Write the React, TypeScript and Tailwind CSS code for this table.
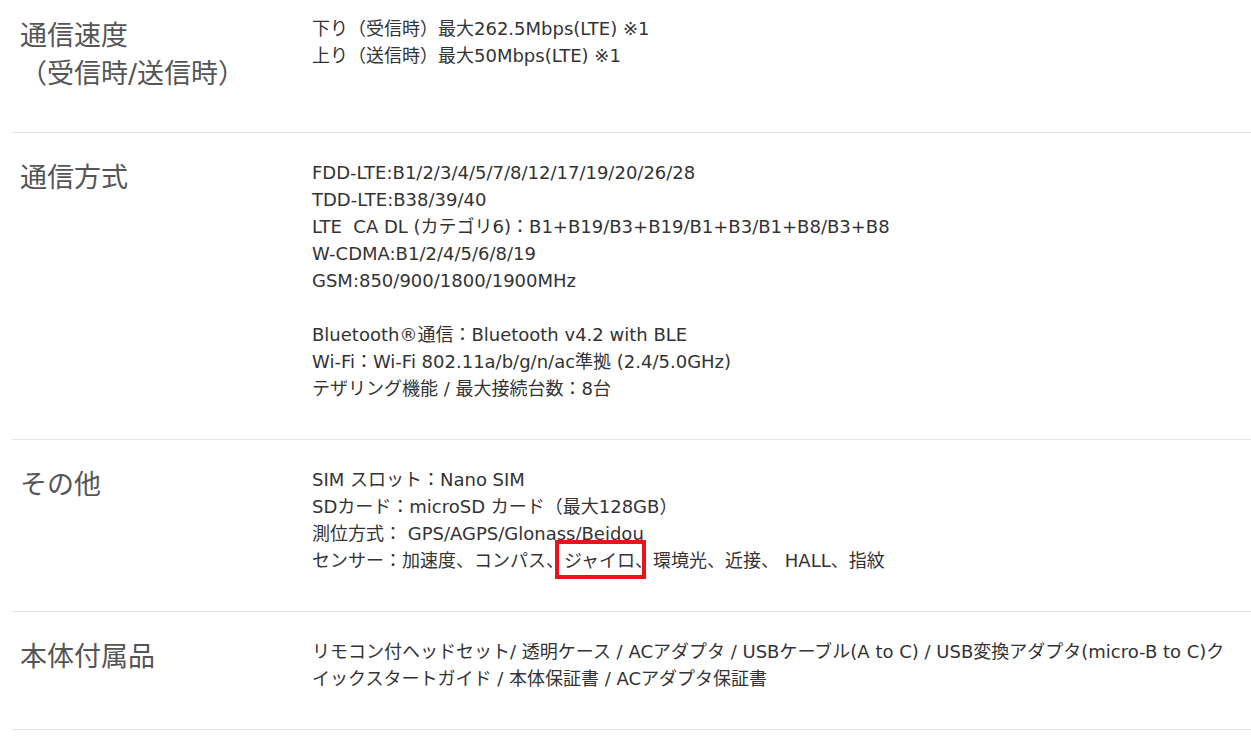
import { ReactNode } from 'react';

type Row = {
  label: ReactNode;
  body: ReactNode;
  first?: boolean;
};

const font = { fontFamily: '"DejaVu Sans", "Noto Sans CJK JP", sans-serif' };

function SpecRow({ label, body, first }: Row) {
  return (
    <div
      className={`flex border-b border-[#e5e5e5] ${first ? 'pt-[15px] pb-[39px]' : 'pt-[26px] pb-[37px]'}`}
    >
      <div
        className={`w-[300px] shrink-0 pl-[8px] text-[27px] leading-[38px] text-[#555] ${first ? 'pt-[2px]' : ''}`}
      >
        {label}
      </div>
      <div className="flex-1 pr-[4px] text-[18px] leading-[27px] text-[#333]">{body}</div>
    </div>
  );
}

export default function App() {
  return (
    <div className="min-h-screen bg-white overflow-hidden" style={font}>
      <div className="ml-[12px]">
        <SpecRow
          first
          label={
            <>
              通信速度
              <br />
              （受信時/送信時）
            </>
          }
          body={
            <>
              <p>下り（受信時）最大262.5Mbps(LTE) ※1</p>
              <p>上り（送信時）最大50Mbps(LTE) ※1</p>
            </>
          }
        />
        <SpecRow
          label="通信方式"
          body={
            <>
              <p>FDD-LTE:B1/2/3/4/5/7/8/12/17/19/20/26/28</p>
              <p>TDD-LTE:B38/39/40</p>
              <p className="whitespace-pre">LTE  CA DL (カテゴリ6)：B1+B19/B3+B19/B1+B3/B1+B8/B3+B8</p>
              <p>W-CDMA:B1/2/4/5/6/8/19</p>
              <p>GSM:850/900/1800/1900MHz</p>
              <p>&nbsp;</p>
              <p>Bluetooth®通信：Bluetooth v4.2 with BLE</p>
              <p>Wi-Fi：Wi-Fi 802.11a/b/g/n/ac準拠 (2.4/5.0GHz)</p>
              <p>テザリング機能 / 最大接続台数：8台</p>
            </>
          }
        />
        <SpecRow
          label="その他"
          body={
            <>
              <p>SIM スロット：Nano SIM</p>
              <p>SDカード：microSD カード（最大128GB）</p>
              <p>測位方式： GPS/AGPS/Glonass/Beidou</p>
              <p>
                センサー：加速度、コンパス、
                <span className="relative inline-block">
                  ジャイロ
                  <span className="absolute -left-[9px] -right-[11px] -top-[7px] -bottom-[5px] border-4 border-[#e8141c]" />
                </span>
                、環境光、近接、 HALL、指紋
              </p>
            </>
          }
        />
        <SpecRow
          label="本体付属品"
          body={
            <p>
              リモコン付ヘッドセット/ 透明ケース / ACアダプタ / USBケーブル(A to C) / USB変換アダプタ(micro-B to C)ク
              <br />
              イックスタートガイド / 本体保証書 / ACアダプタ保証書
            </p>
          }
        />
      </div>
    </div>
  );
}
